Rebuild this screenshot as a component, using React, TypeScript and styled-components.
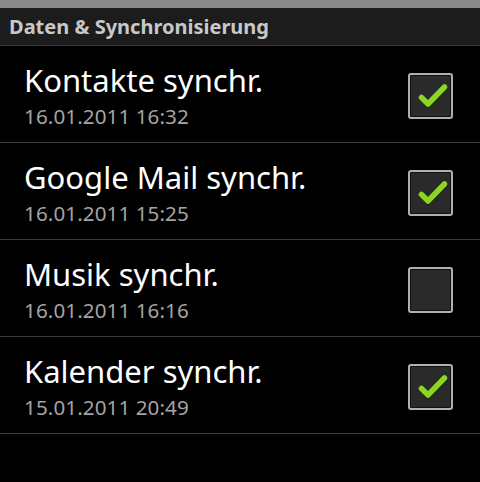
import React from "react";
import styled, { createGlobalStyle } from "styled-components";

const Global = createGlobalStyle`
  html, body { margin: 0; padding: 0; background: #000; }
  body { font-family: "Noto Sans", "Open Sans", sans-serif; }
`;

const Screen = styled.div`
  width: 480px;
  height: 482px;
  background: #000;
  display: flex;
  flex-direction: column;
  overflow: hidden;
`;

const TopStrip = styled.div`
  height: 8px;
  background: #8a8a8a;
`;

const Header = styled.div`
  height: 37px;
  background: #1c1c1c;
  border-bottom: 1px solid #3c3c3c;
  display: flex;
  align-items: center;
  padding-left: 9px;
  color: #c8c8c8;
  font-weight: 700;
  font-size: 20px;
`;

const List = styled.div`
  display: flex;
  flex-direction: column;
`;

const Row = styled.div`
  height: 96px;
  border-bottom: 1px solid #3a3a3a;
  display: flex;
  align-items: center;
  padding: 0 27px 0 24px;
`;

const Texts = styled.div`
  flex: 1;
  display: flex;
  flex-direction: column;
  margin-top: 3px;
`;

const Title = styled.div`
  color: #ffffff;
  font-size: 31px;
  line-height: 36px;
`;

const Sub = styled.div`
  color: #a4a4a4;
  font-size: 20.6px;
  line-height: 26px;
  margin-top: 5px;
  letter-spacing: 0.1px;
`;

const Box = styled.div`
  width: 41px;
  height: 42px;
  margin-top: 3px;
  border: 2px solid #b0b0b0;
  border-radius: 3px;
  background: #2a2a2a;
  box-shadow: inset 0 0 0 1px #111;
  display: flex;
  align-items: center;
  justify-content: center;
`;

const Check = () => (
  <svg width="41" height="42" viewBox="0 0 41 42">
    <path d="M11.5 22.5 L18 29 L34.5 12" fill="none" stroke="#1a2a08" strokeWidth="6" strokeLinecap="round" strokeLinejoin="round" transform="translate(0.6 1)" />
    <path d="M11.5 22.5 L18 29 L34.5 12" fill="none" stroke="#8cd623" strokeWidth="5.5" strokeLinecap="round" strokeLinejoin="round" />
  </svg>
);

const items = [
  { title: "Kontakte synchr.", date: "16.01.2011 16:32", on: true },
  { title: "Google Mail synchr.", date: "16.01.2011 15:25", on: true },
  { title: "Musik synchr.", date: "16.01.2011 16:16", on: false },
  { title: "Kalender synchr.", date: "15.01.2011 20:49", on: true },
];

export default function App() {
  return (
    <Screen>
      <Global />
      <TopStrip />
      <Header>Daten &amp; Synchronisierung</Header>
      <List>
        {items.map((it) => (
          <Row key={it.title}>
            <Texts>
              <Title>{it.title}</Title>
              <Sub>{it.date}</Sub>
            </Texts>
            <Box>{it.on && <Check />}</Box>
          </Row>
        ))}
      </List>
    </Screen>
  );
}
